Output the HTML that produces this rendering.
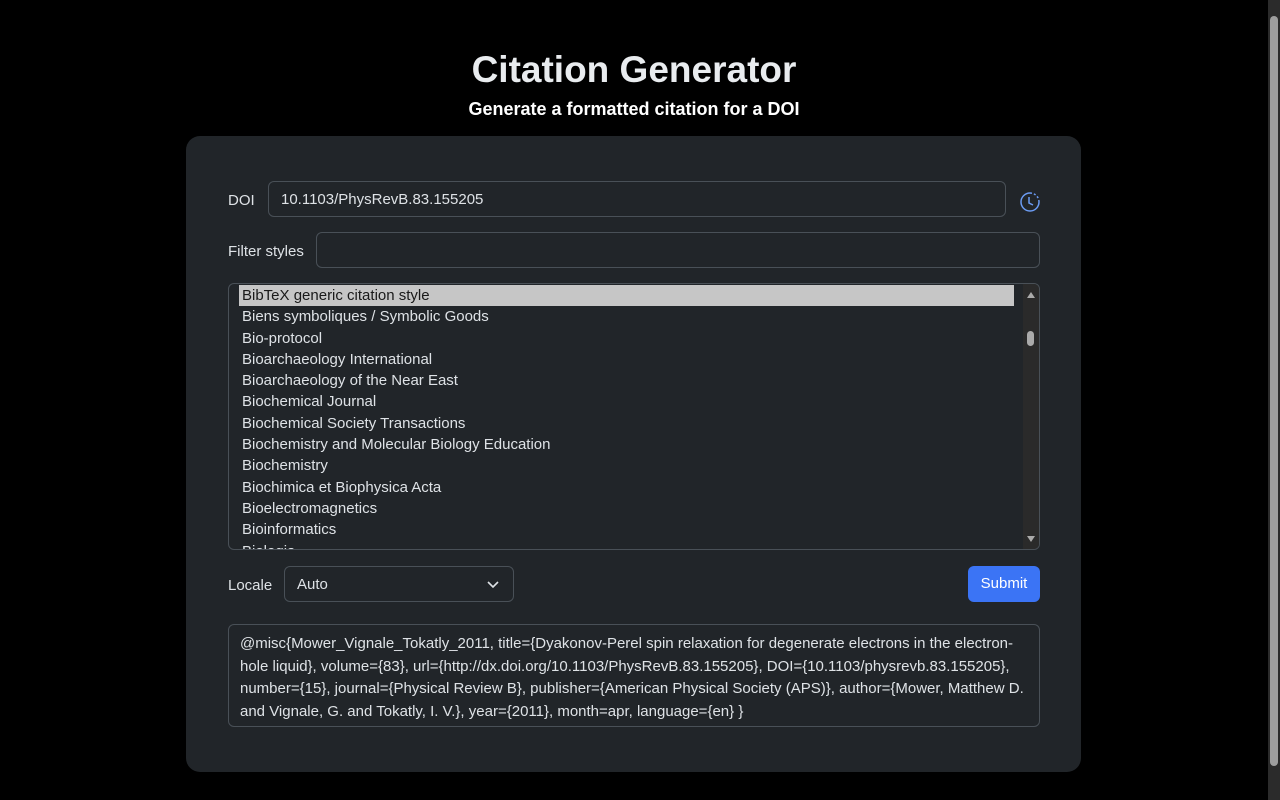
<!DOCTYPE html><html><head><style>
body{margin:0;background:#000;font-family:"Liberation Sans",sans-serif;color:#dee2e6;width:1280px;height:800px;overflow:hidden;position:relative}
.sb{position:absolute;right:0;top:0;width:12px;height:800px;background:#2b2b2b}
.sb i{position:absolute;left:2px;top:16px;width:8px;height:750px;background:#9e9e9e;border-radius:4px}
h1{position:absolute;top:49px;left:0;width:1268px;text-align:center;margin:0;font-size:37px;font-weight:bold;color:#e9ecef}
h2{position:absolute;top:99px;left:0;width:1268px;text-align:center;margin:0;font-size:18px;font-weight:bold;color:#fff}
.card{position:absolute;left:186px;top:136px;width:895px;height:636px;background:#212529;border-radius:14px}
.lbl{position:absolute;font-size:15px}
.in{position:absolute;border:1px solid #495057;border-radius:6px;box-sizing:border-box;font-size:15px;padding-left:12px;display:flex;align-items:center}
.list{position:absolute;left:228px;top:283px;width:812px;height:267px;border:1px solid #495057;border-radius:6px;box-sizing:border-box;overflow:hidden}
.it{height:21.3px;line-height:21.3px;padding-left:13px;font-size:15px;width:772px;box-sizing:border-box}
.sel{background:#c6c6c6;color:#1a1a1a;margin-left:10px;padding-left:3px!important;width:775px!important;margin-top:1px}
.vs{position:absolute;right:0;top:0;width:16px;height:265px;background:#2a2a2a}
.out{position:absolute;left:228px;top:624px;width:812px;height:103px;border:1px solid #495057;border-radius:6px;box-sizing:border-box;padding:8px 11px;font-size:15px;line-height:22.5px}
</style></head><body>
<div class="sb"><i></i></div>
<h1>Citation Generator</h1>
<h2>Generate a formatted citation for a DOI</h2>
<div class="card"></div>
<div class="lbl" style="left:228px;top:192px">DOI</div>
<div class="in" style="left:268px;top:181px;width:738px;height:36px">10.1103/PhysRevB.83.155205</div>
<svg style="position:absolute;left:1020px;top:192px" width="20" height="20" viewBox="0 0 20 20" fill="none" stroke="#6b9bf2" stroke-width="1.5"><path d="M10 1a9 9 0 1 0 9 9" /><path d="M10 1a9 9 0 0 1 9 9" stroke-dasharray="2 2"/><path d="M9 5v6l4 2"/></svg>
<div class="lbl" style="left:228px;top:243px">Filter styles</div>
<div class="in" style="left:316px;top:232px;width:724px;height:36px"></div>
<div class="list">
<div class="it sel">BibTeX generic citation style</div>
<div class="it">Biens symboliques / Symbolic Goods</div>
<div class="it">Bio-protocol</div>
<div class="it">Bioarchaeology International</div>
<div class="it">Bioarchaeology of the Near East</div>
<div class="it">Biochemical Journal</div>
<div class="it">Biochemical Society Transactions</div>
<div class="it">Biochemistry and Molecular Biology Education</div>
<div class="it">Biochemistry</div>
<div class="it">Biochimica et Biophysica Acta</div>
<div class="it">Bioelectromagnetics</div>
<div class="it">Bioinformatics</div>
<div class="it">Biologia</div>
<div class="vs"><svg width="16" height="265"><path d="M4 14h8l-4-6z M4 252h8l-4 6z" fill="#aaa"/><rect x="4" y="47" width="7" height="15" rx="3.5" fill="#aaa"/></svg></div>
</div>
<div class="lbl" style="left:228px;top:577px">Locale</div>
<div class="in" style="left:284px;top:566px;width:230px;height:36px">Auto<svg style="position:absolute;right:14px;top:12px" width="12" height="10"><path d="M1 3l5 5 5-5" stroke="#dee2e6" stroke-width="1.6" fill="none"/></svg></div>
<div style="position:absolute;left:968px;top:566px;width:72px;height:36px;background:#3b74f5;border-radius:6px;color:#fff;font-size:15px;text-align:center;line-height:36px">Submit</div>
<div class="out">@misc{Mower_Vignale_Tokatly_2011, title={Dyakonov-Perel spin relaxation for degenerate electrons in the electron-hole liquid}, volume={83}, url={http://dx.doi.org/10.1103/PhysRevB.83.155205}, DOI={10.1103/physrevb.83.155205}, number={15}, journal={Physical Review B}, publisher={American Physical Society (APS)}, author={Mower, Matthew D. and Vignale, G. and Tokatly, I. V.}, year={2011}, month=apr, language={en} }</div>
</body></html>
